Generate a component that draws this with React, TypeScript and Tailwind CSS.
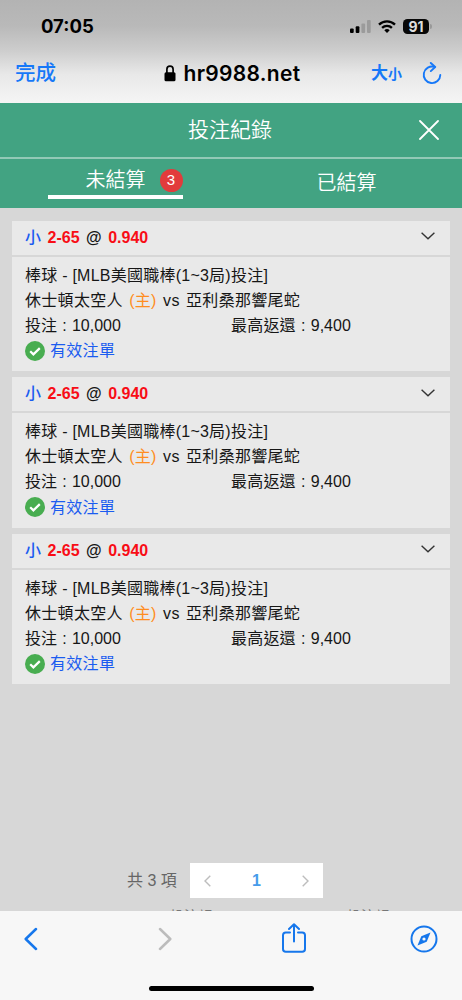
import React from 'react';

interface Bet {
  id: number;
  pick: string;
  line: string;
  odds: string;
  league: string;
  home: string;
  away: string;
  stake: string;
  maxReturn: string;
}

const bets: Bet[] = [1, 2, 3].map((id) => ({
  id,
  pick: '小',
  line: '2-65',
  odds: '0.940',
  league: '棒球 - [MLB美國職棒(1~3局)投注]',
  home: '休士頓太空人',
  away: '亞利桑那響尾蛇',
  stake: '10,000',
  maxReturn: '9,400',
}));

const StatusBar = () => (
  <div className="flex h-[53px] items-center justify-between pl-[41px] pr-[30px]">
    <span className="text-[18.5px] font-bold leading-none">07:05</span>
    <div className="flex items-center">
      <svg width="21" height="13" viewBox="0 0 21 13">
        <rect x="0" y="8.5" width="3.7" height="4.5" rx="1" fill="#000" />
        <rect x="5.7" y="6.3" width="3.7" height="6.7" rx="1" fill="#000" />
        <rect x="11.4" y="3.4" width="3.7" height="9.6" rx="1" fill="#9b9b9b" />
        <rect x="17" y="0" width="3.7" height="13" rx="1" fill="#9b9b9b" />
      </svg>
      <svg className="ml-[7px]" width="18" height="13" viewBox="0 0 18 13" fill="none" stroke="#000" strokeWidth="2.3">
        <path d="M1 4.6a11.3 11.3 0 0 1 16 0" />
        <path d="M4.1 7.9a6.9 6.9 0 0 1 9.8 0" />
        <path d="M9 13 6.3 10.2a3.9 3.9 0 0 1 5.4 0Z" fill="#000" stroke="none" />
      </svg>
      <div className="ml-[7px] flex h-[15px] w-[26px] items-center justify-center rounded-[4.5px] bg-[#080808] text-[14px] font-bold leading-none text-[#dedede]">
        91
      </div>
      <div className="ml-px h-[5px] w-[2px] rounded-r-full bg-[#999]" />
    </div>
  </div>
);

const AddressBar = () => (
  <div className="flex h-[49px] items-center pb-[9px] pl-[15px] pr-[20px]">
    <span className="w-[149px] text-[20.5px] font-medium leading-none text-[#1678f8]">完成</span>
    <svg width="12" height="17" viewBox="0 0 11 17">
      <path d="M2.4 8V4.3a3.1 3.1 0 0 1 6.2 0V8" fill="none" stroke="#000" strokeWidth="1.7" />
      <rect x="0" y="7.3" width="11" height="9" rx="1.5" fill="#000" />
    </svg>
    <span className="ml-[7.5px] w-[187.5px] text-[21px] font-semibold leading-none tracking-[0.3px]">hr9988.net</span>
    <span className="flex items-baseline font-bold leading-none text-[#1678f8]">
      <span className="text-[17px]">大</span>
      <span className="text-[14px]">小</span>
    </span>
    <svg
      className="ml-auto"
      width="20"
      height="23"
      viewBox="0 0 20 23"
      fill="none"
      stroke="#1678f8"
      strokeWidth="1.9"
      strokeLinecap="round"
      strokeLinejoin="round"
    >
      <path d="M12.5 4.9A8.3 8.3 0 1 0 18.3 13" />
      <path d="m8.8 1 4.4 4-4.4 4.1" />
    </svg>
  </div>
);

const Header = () => (
  <div className="h-[105.5px] bg-[#42a382] font-[350] text-white">
    <div className="flex h-[56px] items-center border-b-2 border-[#92c9b6] pl-[188px] pr-[23px]">
      <span className="text-[21px] leading-none">投注紀錄</span>
      <svg className="ml-auto" width="20" height="20" viewBox="0 0 20 20" stroke="#fff" strokeWidth="1.8" strokeLinecap="round">
        <path d="m1 1 18 18M19 1 1 19" />
      </svg>
    </div>
    <div className="grid grid-cols-2">
      <div className="flex justify-center">
        <div className="mr-px flex h-[40px] w-[135px] items-center justify-end border-b-4 border-white">
          <span className="mr-[14px] mt-[6px] text-[20px] leading-none">未結算</span>
          <span className="mt-[7px] flex h-[23px] w-[23px] items-center justify-center rounded-full bg-[#e23b3c] text-[15px]">
            3
          </span>
        </div>
      </div>
      <div className="flex h-[49.5px] items-center justify-center text-[20px]">已結算</div>
    </div>
  </div>
);

const BetCard = ({ bet }: { bet: Bet }) => (
  <div className="h-[150.5px] bg-[#e9e9e9] text-[16px] text-[#161616]">
    <div className="flex h-[36px] items-center border-b-2 border-[#d7d7d7] pl-[13px] pr-[15px] font-bold">
      <span className="font-medium text-[#1b5cf0]">{bet.pick}</span>
      <span className="ml-[6.5px] text-[#f80d16]">{bet.line}</span>
      <span className="ml-[6.5px]">@</span>
      <span className="ml-[6.5px] text-[#f80d16]">{bet.odds}</span>
      <svg
        className="mb-[3px] ml-auto"
        width="14"
        height="8"
        viewBox="0 0 14 8"
        fill="none"
        stroke="#333"
        strokeWidth="1.4"
      >
        <path d="m.6.8 6.4 6 6.4-6" />
      </svg>
    </div>
    <div className="pl-[13px] pt-[6px] leading-[25px]">
      <div className="whitespace-nowrap tracking-[0.24px]">{bet.league}</div>
      <div className="whitespace-nowrap tracking-[0.3px] [word-spacing:1.6px]">
        {bet.home} <span className="text-[#ff8d1f]">(主)</span> vs {bet.away}
      </div>
      <div className="flex [word-spacing:0.8px]">
        <span className="w-[206px]">投注 : {bet.stake}</span>
        <span>
          <span className="tracking-[0.2px]">最高返還</span> : {bet.maxReturn}
        </span>
      </div>
      <div className="flex h-[26px] items-center text-[#1b5cf0]">
        <svg className="mr-[5px]" width="20" height="20" viewBox="0 0 20 20">
          <circle cx="10" cy="10" r="10" fill="#48ad50" />
          <path d="m5.2 10.2 3.2 3.2 6.4-6.3" fill="none" stroke="#fff" strokeWidth="2.2" />
        </svg>
        <span className="tracking-[0.3px]">有效注單</span>
      </div>
    </div>
  </div>
);

const Pagination = () => (
  <div className="flex items-center pl-[127px] text-[16px]">
    <span className="w-[63px] text-[#666]">共 3 項</span>
    <div className="flex h-[35px] w-[133px] items-center justify-between bg-white px-[14px]">
      <svg width="7" height="12" viewBox="0 0 7 12" fill="none" stroke="#bdbdbd" strokeWidth="1.4">
        <path d="M6.3.8 1 6l5.3 5.2" />
      </svg>
      <span className="font-bold text-[#469bea]">1</span>
      <svg width="7" height="12" viewBox="0 0 7 12" fill="none" stroke="#bdbdbd" strokeWidth="1.4">
        <path d="M.7.8 6 6 .7 11.2" />
      </svg>
    </div>
  </div>
);

const Toolbar = () => (
  <div className="flex h-[89.5px] flex-col items-center justify-between bg-[#f7f7f7] pb-[9px]">
    <div className="flex h-[56.5px] w-full items-center px-[24px]">
      <svg width="14" height="24" viewBox="0 0 14 24" fill="none" stroke="#1677ec" strokeWidth="2.5" strokeLinecap="round" strokeLinejoin="round">
        <path d="M12 2 1.7 12 12 22" />
      </svg>
      <svg className="ml-[120px]" width="14" height="24" viewBox="0 0 14 24" fill="none" stroke="#bcbcbc" strokeWidth="2.5" strokeLinecap="round" strokeLinejoin="round">
        <path d="M2 2 12.3 12 2 22" />
      </svg>
      <svg className="mb-[2px] ml-[110px]" width="24" height="30" viewBox="0 0 24 30" fill="none" stroke="#1677ec" strokeWidth="2" strokeLinecap="round" strokeLinejoin="round">
        <path d="M8 9.5H3.8A2.8 2.8 0 0 0 1 12.3V26a2.8 2.8 0 0 0 2.8 2.8h16.4A2.8 2.8 0 0 0 23 26V12.3a2.8 2.8 0 0 0-2.8-2.8H16" />
        <path d="M12 18.5v-17M7 6l5-4.8L17 6" />
      </svg>
      <svg className="ml-auto" width="28" height="28" viewBox="0 0 28 28">
        <circle cx="14" cy="14" r="12.5" fill="none" stroke="#1677ec" strokeWidth="2" />
        <path d="m20.5 7.5-3.8 9.2-9.2 3.8 3.8-9.2Z" fill="#1677ec" />
        <circle cx="14" cy="14" r="1.6" fill="#f7f7f7" />
      </svg>
    </div>
    <div className="h-[5px] w-[165px] rounded-full bg-black" />
  </div>
);

const App = () => (
  <div className="flex h-[1000px] w-[462px] flex-col overflow-hidden bg-[#d7d7d7] font-['Liberation_Sans','Noto_Sans_CJK_TC',sans-serif]">
    <div className="h-[102.5px] bg-[linear-gradient(#b3b3b3,#b9b9b9_25%,#cccccc_48%,#e8e8e8_72%,#f5f5f5)] font-['Inter','Noto_Sans_CJK_TC',sans-serif] text-black">
      <StatusBar />
      <AddressBar />
    </div>
    <Header />
    <div className="flex h-[655px] flex-col gap-[6px] px-[12px] pt-[12.5px]">
      {bets.map((bet) => (
        <BetCard key={bet.id} bet={bet} />
      ))}
    </div>
    <Pagination />
    {/* next row only peeks out above the browser toolbar */}
    <div className="flex h-[12.5px] overflow-hidden pl-[170px] pt-[9px] text-[14px] leading-[18px] text-[#777]">
      <span className="w-[177px]">投注額</span>
      <span>投注額</span>
    </div>
    <Toolbar />
  </div>
);

export default App;
